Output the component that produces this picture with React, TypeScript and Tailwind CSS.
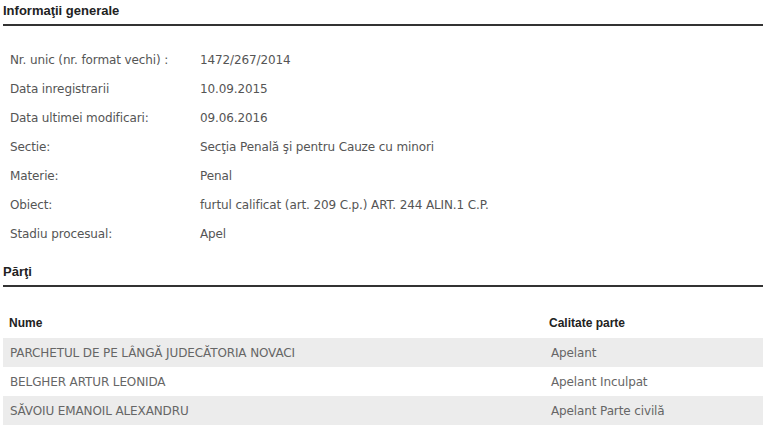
import React from 'react'

const info: [string, string][] = [
  ['Nr. unic (nr. format vechi) :', '1472/267/2014'],
  ['Data inregistrarii', '10.09.2015'],
  ['Data ultimei modificari:', '09.06.2016'],
  ['Sectie:', 'Secţia Penală şi pentru Cauze cu minori'],
  ['Materie:', 'Penal'],
  ['Obiect:', 'furtul calificat (art. 209 C.p.) ART. 244 ALIN.1 C.P.'],
  ['Stadiu procesual:', 'Apel'],
]

const parti: [string, string][] = [
  ['PARCHETUL DE PE LÂNGĂ JUDECĂTORIA NOVACI', 'Apelant'],
  ['BELGHER ARTUR LEONIDA', 'Apelant Inculpat'],
  ['SĂVOIU EMANOIL ALEXANDRU', 'Apelant Parte civilă'],
]

const body = "font-['DejaVu_Sans',Tahoma,sans-serif] text-[12px] tracking-[-0.12px] text-[#555]"

const SectionTitle: React.FC<{ title: string }> = ({ title }) => (
  <div className="h-[26px] border-b-2 border-[#333] pt-[1px]">
    <h2 className="font-['Liberation_Sans',Arial,sans-serif] text-[13px] font-bold leading-[20px] text-[#222]">
      {title}
    </h2>
  </div>
)

const App: React.FC = () => {
  return (
    <div className="h-[426px] w-[768px] overflow-hidden bg-white">
      <div className="ml-[3px] w-[760px]">
        <SectionTitle title="Informaţii generale" />

        <div className={`mt-[19px] ${body}`}>
          {info.map(([label, value]) => (
            <div key={label} className="flex h-[29px] items-center">
              <div className="w-[197px] pl-[7px]">{label}</div>
              <div>{value}</div>
            </div>
          ))}
        </div>

        <div className="mt-[13px]">
          <SectionTitle title="Părţi" />
        </div>

        <div className="mt-[24px]">
          <div className="flex h-[27px] items-center pb-[3px] font-['Liberation_Sans',Arial,sans-serif] text-[12px] font-bold text-[#222]">
            <div className="w-[546px] pl-[6px]">Nume</div>
            <div>Calitate parte</div>
          </div>
          <div className={body}>
            {parti.map(([name, role], i) => (
              <div
                key={name}
                className={`flex h-[29px] items-center ${i % 2 === 0 ? 'bg-[#ececec]' : 'bg-white'}`}
              >
                <div className="w-[548px] pl-[7px] text-[#666]">{name}</div>
                <div className="text-[#666]">{role}</div>
              </div>
            ))}
          </div>
        </div>
      </div>
    </div>
  )
}

export default App
